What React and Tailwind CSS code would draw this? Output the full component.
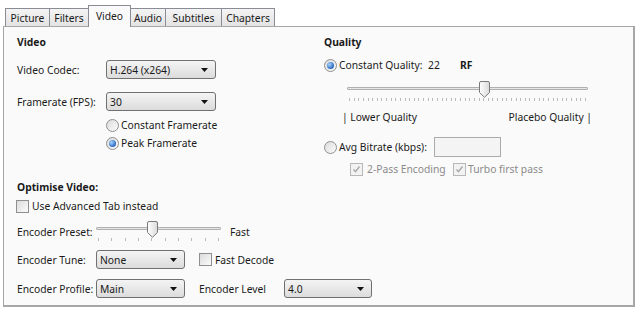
import React from "react";

const tabs = [
  { name: "Picture", w: "w-[45px]" },
  { name: "Filters", w: "w-[40px]" },
  { name: "Video", w: "w-[43px]", active: true },
  { name: "Audio", w: "w-[36px]" },
  { name: "Subtitles", w: "w-[57px]" },
  { name: "Chapters", w: "w-[54px]" },
];

const Caret = () => (
  <svg width="7" height="4" viewBox="0 0 7 4" className="shrink-0">
    <path d="M0 0h7L3.5 4z" fill="#111" />
  </svg>
);

const Select = ({ value, w }) => (
  <div className={`${w} h-[19px] shrink-0 rounded-[3px] border border-[#707070] bg-gradient-to-b from-[#f4f4f4] to-[#dcdcdc] flex items-center justify-between pl-[3px] pr-[7px]`}>
    <span>{value}</span>
    <Caret />
  </div>
);

const Radio = ({ on }) => (
  <span className="w-[13px] h-[13px] shrink-0 rounded-full border border-[#8e8f8f] bg-gradient-to-br from-[#dcdcdc] to-[#fbfbfb] flex items-center justify-center">
    {on && <span className="w-[7px] h-[7px] rounded-full bg-[radial-gradient(circle_at_35%_35%,#a9d6ff,#2a66bf_70%)]" />}
  </span>
);

const Check = ({ on, disabled }) => (
  <span className={`w-[13px] h-[13px] shrink-0 border flex items-center justify-center ${disabled ? "border-[#b8b8b8] bg-[#f2f2f2]" : "border-[#8e8f8f] bg-gradient-to-br from-[#dcdcdc] to-[#fbfbfb]"}`}>
    {on && (
      <svg width="9" height="9" viewBox="0 0 9 9">
        <path d="M1.5 4.5l2 2.2L7.5 1.5" fill="none" stroke={disabled ? "#a8a8a8" : "#333"} strokeWidth="1.4" />
      </svg>
    )}
  </span>
);

const Thumb = () => (
  <svg width="11" height="17" viewBox="0 0 11 17">
    <defs>
      <linearGradient id="tg" x1="0" y1="0" x2="1" y2="0">
        <stop offset="0" stopColor="#ffffff" />
        <stop offset="1" stopColor="#dadada" />
      </linearGradient>
    </defs>
    <path d="M0.5 2Q0.5 0.5 2 0.5H9Q10.5 0.5 10.5 2V11.5L5.5 16.3L0.5 11.5Z" fill="url(#tg)" stroke="#7a7a7a" />
  </svg>
);

const Slider = ({ w, ticks, pos }) => (
  <div className={`${w} relative h-[21px] shrink-0`}>
    <div className="absolute left-0 right-0 top-[6px] h-[3px] border border-[#b0b0b0] bg-[#e6e6e6] rounded-[1px]" />
    <div className="absolute left-[2px] right-[2px] top-[17px] h-[3px] flex justify-between">
      {Array.from({ length: ticks }).map((_, i) => (
        <span key={i} className="w-px h-[3px] bg-[#b9b9b9]" />
      ))}
    </div>
    <div className="absolute top-0" style={{ left: `calc(${pos * 100}% - 5px)` }}>
      <Thumb />
    </div>
  </div>
);

export default function App() {
  return (
    <div className="w-[640px] h-[310px] bg-white pt-[5px] pl-[3px] font-['Noto_Sans',sans-serif] text-[10.3px] leading-[16px] text-[#1a1a1a] whitespace-nowrap">
      <div className="flex items-end h-[21px] pl-[2px]">
        {tabs.map((t) =>
          t.active ? (
            <div key={t.name} className={`${t.w} -ml-px h-[22px] -mb-px relative z-10 border border-b-0 border-[#898c95] bg-[#fafafa] flex items-center justify-center pb-[2px]`}>
              {t.name}
            </div>
          ) : (
            <div key={t.name} className={`${t.w} -ml-px first:ml-0 h-[18px] border border-b-0 border-[#898c95] bg-gradient-to-b from-[#f4f4f4] to-[#e3e3e3] flex items-center justify-center`}>
              {t.name}
            </div>
          )
        )}
      </div>
      <div className="w-[632px] h-[281px] border-l border-t border-r-2 border-b-2 border-[#a6a6a6] bg-[#fafafa] flex">
        <div className="w-[320px] pl-[13px] flex flex-col">
          <div className="mt-[7px] font-bold">Video</div>
          <div className="mt-[10px] flex items-center">
            <span className="w-[89px] shrink-0">Video Codec:</span>
            <Select value="H.264 (x264)" w="w-[110px]" />
          </div>
          <div className="mt-[13px] flex items-center">
            <span className="w-[89px] shrink-0">Framerate (FPS):</span>
            <Select value="30" w="w-[110px]" />
          </div>
          <div className="mt-[6px] ml-[89px] flex items-center gap-[2px]">
            <Radio />
            <span>Constant Framerate</span>
          </div>
          <div className="mt-[2px] ml-[89px] flex items-center gap-[2px]">
            <Radio on />
            <span>Peak Framerate</span>
          </div>
          <div className="mt-[28px] font-bold">Optimise Video:</div>
          <div className="mt-[3px] -ml-px flex items-center gap-[3px]">
            <Check />
            <span>Use Advanced Tab instead</span>
          </div>
          <div className="mt-[6px] flex items-center h-[22px]">
            <span className="w-[79px] shrink-0 pt-[1px]">Encoder Preset:</span>
            <Slider w="w-[125px]" ticks={10} pos={4 / 9} />
            <span className="ml-[9px] pt-[1px]">Fast</span>
          </div>
          <div className="mt-[8px] flex items-center">
            <span className="w-[79px] shrink-0">Encoder Tune:</span>
            <Select value="None" w="w-[89px]" />
            <span className="ml-[14px] flex items-center gap-[3px]">
              <Check />
              <span>Fast Decode</span>
            </span>
          </div>
          <div className="mt-[10px] flex items-center">
            <span className="w-[79px] shrink-0">Encoder Profile:</span>
            <Select value="Main" w="w-[89px]" />
            <span className="ml-[14px] w-[85px] shrink-0">Encoder Level</span>
            <Select value="4.0" w="w-[88px]" />
          </div>
        </div>
        <div className="flex-1 flex flex-col">
          <div className="mt-[7px] font-bold">Quality</div>
          <div className="mt-[7px] flex items-center">
            <Radio on />
            <span className="ml-[2px] w-[89px] shrink-0">Constant Quality:</span>
            <span className="w-[32px] shrink-0">22</span>
            <span className="font-bold">RF</span>
          </div>
          <div className="mt-[8px] ml-[23px]">
            <Slider w="w-[241px]" ticks={52} pos={29 / 51} />
          </div>
          <div className="mt-[7px] ml-[18px] w-[250px] flex justify-between">
            <span>| Lower Quality</span>
            <span>Placebo Quality |</span>
          </div>
          <div className="mt-[12px] flex items-center">
            <Radio />
            <span className="ml-[2px] w-[95px] shrink-0">Avg Bitrate (kbps):</span>
            <div className="w-[67px] h-[20px] border border-[#ababab] bg-[#f4f4f4]" />
          </div>
          <div className="mt-[4px] ml-[26px] flex items-center text-[#8a8a8a]">
            <span className="w-[103px] shrink-0 flex items-center gap-[4px]">
              <Check on disabled />
              <span>2-Pass Encoding</span>
            </span>
            <span className="flex items-center gap-[2px]">
              <Check on disabled />
              <span>Turbo first pass</span>
            </span>
          </div>
        </div>
      </div>
    </div>
  );
}
